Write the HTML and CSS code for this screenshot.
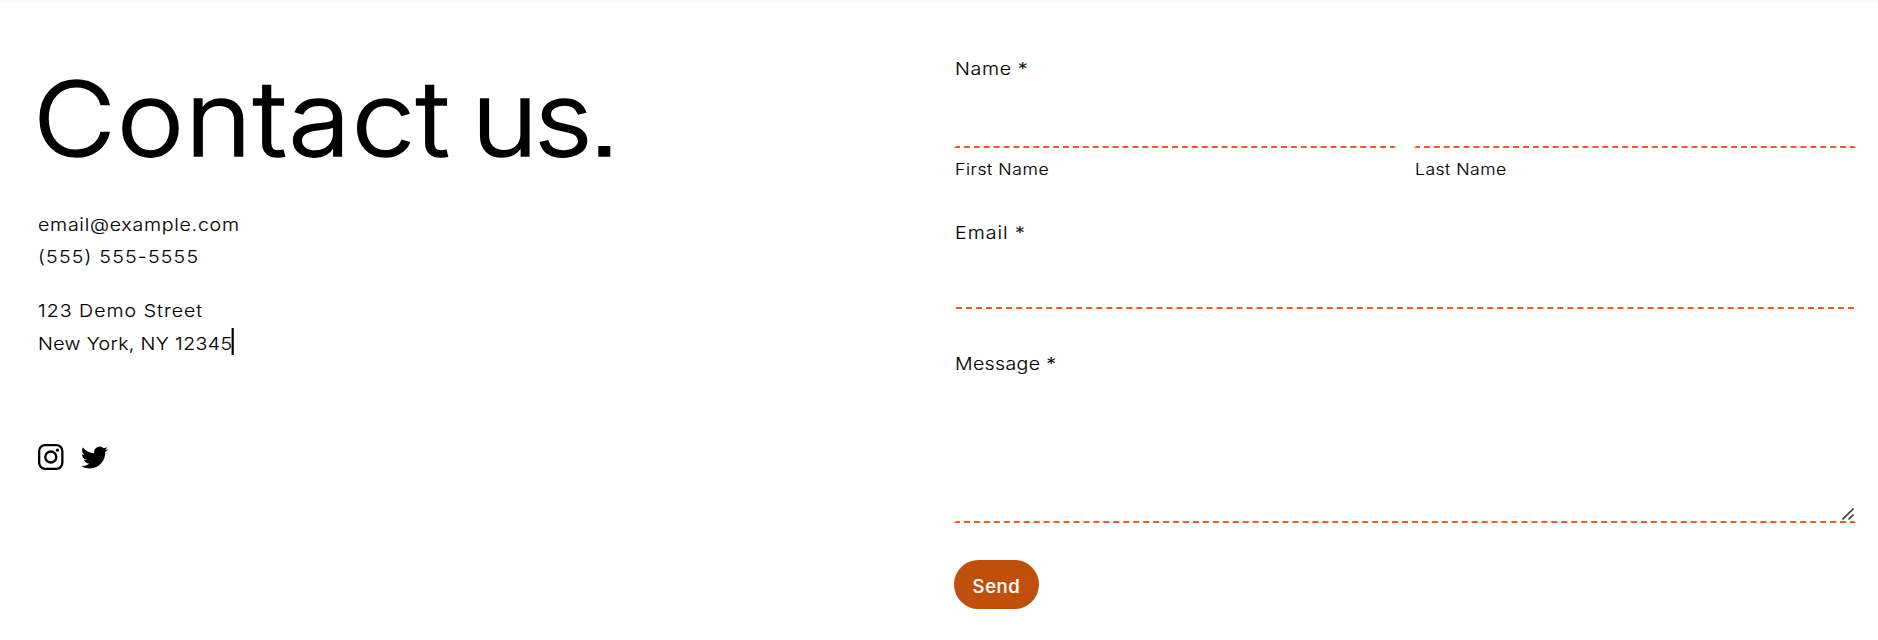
FILE: index.html
```html
<!DOCTYPE html>
<html lang="en">
<head>
<meta charset="utf-8">
<title>Contact us</title>
<link rel="stylesheet" href="styles.css">
</head>
<body>
<main class="contact">
  <section class="info">
    <h1 class="title">Contact <span class="tight">us.</span></h1>
    <p class="lines"><span class="wide mail">email@example.com</span><span class="wide phone">(555) 555-5555</span></p>
    <p class="lines"><span class="wide street">123 Demo Street</span><span class="wide city">New York, NY 12345<span class="caret"></span></span></p>
    <div class="social">
      <svg class="icon" viewBox="0 0 26 26" fill="none" stroke="#000" stroke-width="2.3"><rect x="1.15" y="1.15" width="23.2" height="23.7" rx="6"/><circle cx="12.8" cy="13" r="5.5"/><circle cx="19.4" cy="6.2" r="1.6" fill="#000" stroke="none"/></svg>
      <svg class="icon bird" viewBox="0 2 24 20"><path d="M23.95 4.57a10 10 0 0 1-2.82.77 4.96 4.96 0 0 0 2.16-2.72c-.95.55-2 .96-3.13 1.18a4.92 4.92 0 0 0-8.38 4.48C7.69 8.1 4.07 6.13 1.64 3.16a4.9 4.9 0 0 0-.67 2.48c0 1.71.87 3.21 2.19 4.1a4.9 4.9 0 0 1-2.23-.62v.06a4.92 4.92 0 0 0 3.95 4.83 5 5 0 0 1-2.21.08 4.94 4.94 0 0 0 4.6 3.42A9.87 9.87 0 0 1 0 19.54a14 14 0 0 0 7.55 2.21c9.05 0 14-7.5 14-13.98 0-.21 0-.42-.02-.63a9.9 9.9 0 0 0 2.46-2.55z"/></svg>
    </div>
  </section>
  <form class="form">
    <div class="label"><span class="wide name">Name *</span></div>
    <div class="names">
      <label class="field"><input class="input" type="text"><span class="caption"><span class="wide first">First Name</span></span></label>
      <label class="field"><input class="input" type="text"><span class="caption"><span class="wide last">Last Name</span></span></label>
    </div>
    <label class="label email-label" for="email"><span class="wide email">Email *</span></label>
    <input class="input inset" id="email" type="email">
    <label class="label message-label" for="message"><span class="wide message">Message *</span></label>
    <div class="area-box">
      <textarea class="input area" id="message"></textarea>
      <svg class="grip" viewBox="0 0 12 12" stroke="#444" stroke-width="1.7"><path d="M.5 11.5l11-11M6.5 11.5l5-5"/></svg>
    </div>
    <button class="send" type="button">Send</button>
  </form>
</main>
</body>
</html>
```

FILE: styles.css
```css
* { box-sizing: border-box; }
body {
  margin: 0;
  height: 640px;
  background: linear-gradient(#f8f8f8, #fff 5px) #fff;
  color: #000;
  font: 300 17.8px/32.4px Inter, "Liberation Sans", sans-serif;
}
.contact {
  display: grid;
  grid-template-columns: 916px 902px;
  padding-left: 38px;
}
.info { padding-top: 52px; }
.title {
  margin: 0 0 23px -5px;
  font-size: 103.5px;
  font-weight: 300;
  line-height: 134px;
  letter-spacing: .7px;
  word-spacing: -11px;
  white-space: nowrap;
  transform: scaleX(1.1);
  transform-origin: 0 0;
  font-feature-settings: "ss07";
  -webkit-text-stroke: 1.5px #000;
}
.tight { letter-spacing: -4px; }
.lines { display: flex; flex-direction: column; align-items: flex-start; margin: 0 0 21.5px; white-space: nowrap; }
.wide { display: inline-block; transform: scaleX(1.1); transform-origin: 0 0; -webkit-text-stroke: .12px #000; }
.mail { letter-spacing: .67px; }
.phone { letter-spacing: 1.12px; }
.street { letter-spacing: .92px; }
.city { letter-spacing: .33px; }
.caret {
  display: inline-block;
  width: 2px;
  height: 27px;
  margin: -9px 0 -9px -1px;
  background: #000;
  vertical-align: -5px;
  transform: translateY(-9px);
}
.social { display: flex; align-items: center; gap: 17px; margin-top: 84px; }
.icon { display: block; width: 26px; height: 26px; }
.bird { width: 27px; height: 23px; }

.form { display: flex; flex-direction: column; padding-top: 53px; }
.label { padding-left: 1px; line-height: 32px; }
.name { letter-spacing: .6px; }
.email { letter-spacing: .9px; }
.message { letter-spacing: .3px; }
.email-label { margin-top: 32px; }
.message-label { margin-top: 39px; }
.names { display: grid; grid-template-columns: 1fr 1fr; gap: 18px; }
.field { display: flex; flex-direction: column; }
.input {
  display: block;
  width: 100%;
  height: 63px;
  padding: 0;
  border: 2px dashed transparent;
  border-bottom-color: #f05a28;
  background: transparent;
  font: inherit;
  outline: 0;
}
.inset {
  width: 898px;
  height: 60px;
  margin-left: 2px;
  border-width: 0 0 2px;
}
.area-box { position: relative; }
.area { height: 143px; resize: none; }
.grip { position: absolute; right: 2px; bottom: 3px; width: 12px; height: 12px; }
.caption { height: 37px; padding: 7px 0 0 1px; font-size: 16px; line-height: 28px; }
.first { letter-spacing: .5px; }
.last { letter-spacing: .42px; }
.send {
  width: 85px;
  height: 49px;
  margin-top: 37px;
  padding: 2px 0 0;
  border: 0;
  border-radius: 25px;
  background: #bf4f0b;
  color: #fff;
  font: 500 18.5px/24px Inter, "Liberation Sans", sans-serif;
  letter-spacing: .6px;
  -webkit-text-stroke: .15px #fff;
}
```
